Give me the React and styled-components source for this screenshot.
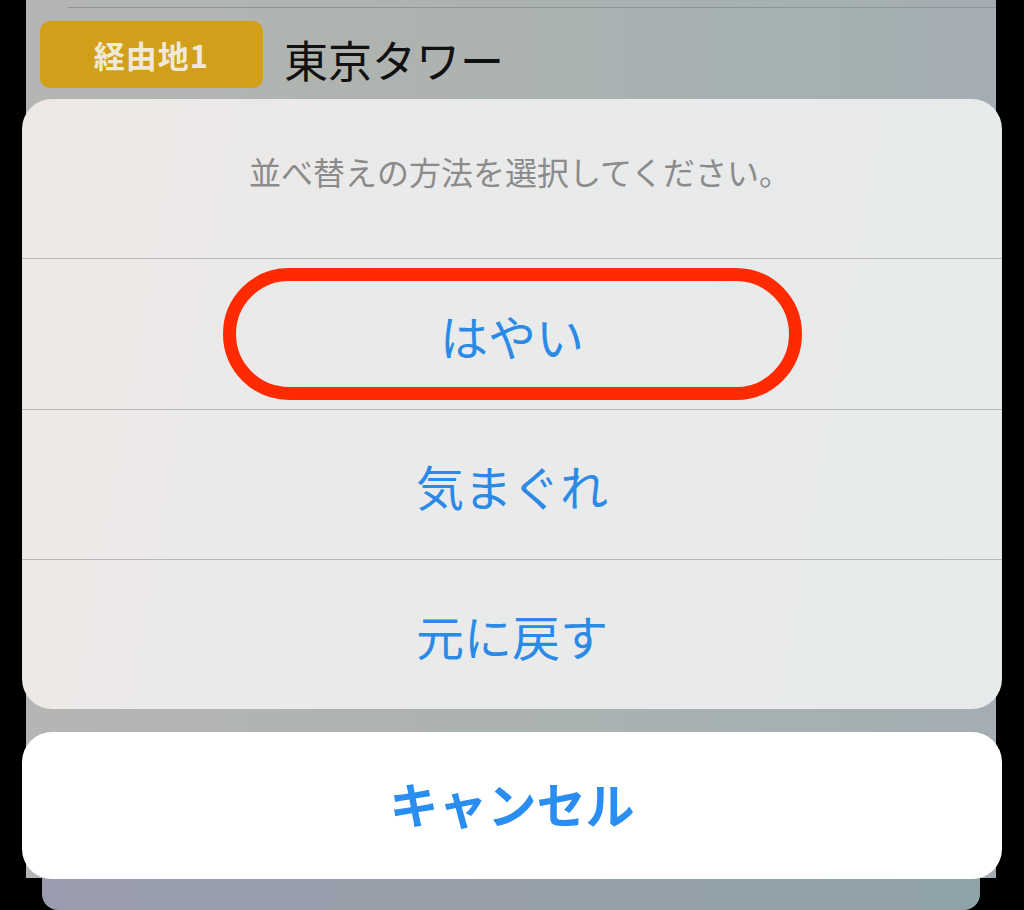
import styled, { createGlobalStyle } from 'styled-components';

const GlobalStyle = createGlobalStyle`
	html, body {
		margin: 0;
		padding: 0;
		background: #000;
	}
	body {
		font-family: 'Noto Sans CJK JP', 'Noto Sans', sans-serif;
	}
`;

const options = [
	{ label: 'はやい', marked: true },
	{ label: '気まぐれ' },
	{ label: '元に戻す' },
];

const App = () => {
	return (
		<StyledPage>
			<GlobalStyle />
			<StyledSheet>
				<StyledRule />
				<StyledStopRow>
					<StyledBadge>経由地1</StyledBadge>
					<StyledPlace>東京タワー</StyledPlace>
				</StyledStopRow>
			</StyledSheet>
			<StyledUnder />

			{/* action sheet lies over the page */}
			<StyledActions>
				<StyledGroup>
					<StyledTitle>並べ替えの方法を選択してください。</StyledTitle>
					{options.map((option) => (
						<StyledOption key={option.label}>
							{option.marked ? (
								<StyledRing>{option.label}</StyledRing>
							) : (
								option.label
							)}
						</StyledOption>
					))}
				</StyledGroup>
				<StyledCancel>キャンセル</StyledCancel>
			</StyledActions>
		</StyledPage>
	);
};

const StyledPage = styled.div`
	position: relative;
	display: flex;
	flex-direction: column;
	width: 1024px;
	height: 910px;
	overflow: hidden;
	background: #000;
`;

const StyledSheet = styled.div`
	display: flex;
	flex-direction: column;
	margin: 0 28px 0 26px;
	height: 880px;
	background: linear-gradient(
		90deg,
		#b5b6b3 0%,
		#aeb3b0 40%,
		#a6b1b3 75%,
		#a4aeb2 100%
	);
`;

const StyledRule = styled.div`
	margin: 7px 0 0 42px;
	height: 1px;
	background: #8e9595;
`;

const StyledStopRow = styled.div`
	display: flex;
	align-items: center;
	gap: 21px;
	padding: 13px 0 0 14px;
`;

const StyledBadge = styled.div`
	display: flex;
	align-items: center;
	justify-content: center;
	width: 223px;
	height: 67px;
	border-radius: 10px;
	background: #d29f1b;
	color: #f1e9d8;
	font-size: 31px;
	font-weight: 700;
	letter-spacing: 1px;
`;

const StyledPlace = styled.div`
	color: #111;
	font-size: 44px;
	line-height: 1;
	padding-top: 8px;
`;

const StyledUnder = styled.div`
	margin: 0 44px 0 42px;
	height: 32px;
	border-radius: 0 0 16px 16px;
	background: linear-gradient(90deg, #9a9daf 0%, #97a0a9 50%, #8fa3a8 100%);
`;

const StyledActions = styled.div`
	position: absolute;
	left: 22px;
	right: 22px;
	top: 99px;
	display: flex;
	flex-direction: column;
	gap: 23px;
`;

const StyledGroup = styled.div`
	display: flex;
	flex-direction: column;
	border-radius: 30px;
	overflow: hidden;
	background: linear-gradient(100deg, #ede8e6 0%, #eaeaea 35%, #e7eaeb 100%);
`;

const StyledTitle = styled.div`
	display: flex;
	align-items: center;
	justify-content: center;
	height: 160px;
	padding: 0 0 16px 16px;
	box-sizing: border-box;
	color: #8b8b8b;
	font-size: 32px;
	border-bottom: 1px solid #b8baba;
`;

const StyledOption = styled.div`
	display: flex;
	align-items: center;
	justify-content: center;
	height: 150px;
	box-sizing: border-box;
	color: #2b8ae6;
	font-size: 48px;
	& + & {
		border-top: 1px solid #b8baba;
	}
`;

const StyledRing = styled.span`
	display: flex;
	align-items: center;
	justify-content: center;
	width: 579px;
	height: 132px;
	box-sizing: border-box;
	border: 13px solid #ff2a00;
	border-radius: 66px;
	padding-top: 2px;
`;

const StyledCancel = styled.div`
	display: flex;
	align-items: center;
	justify-content: center;
	height: 147px;
	padding-bottom: 6px;
	box-sizing: border-box;
	border-radius: 30px;
	background: #fff;
	color: #2a8df0;
	font-size: 49px;
	font-weight: 700;
`;

export default App;
